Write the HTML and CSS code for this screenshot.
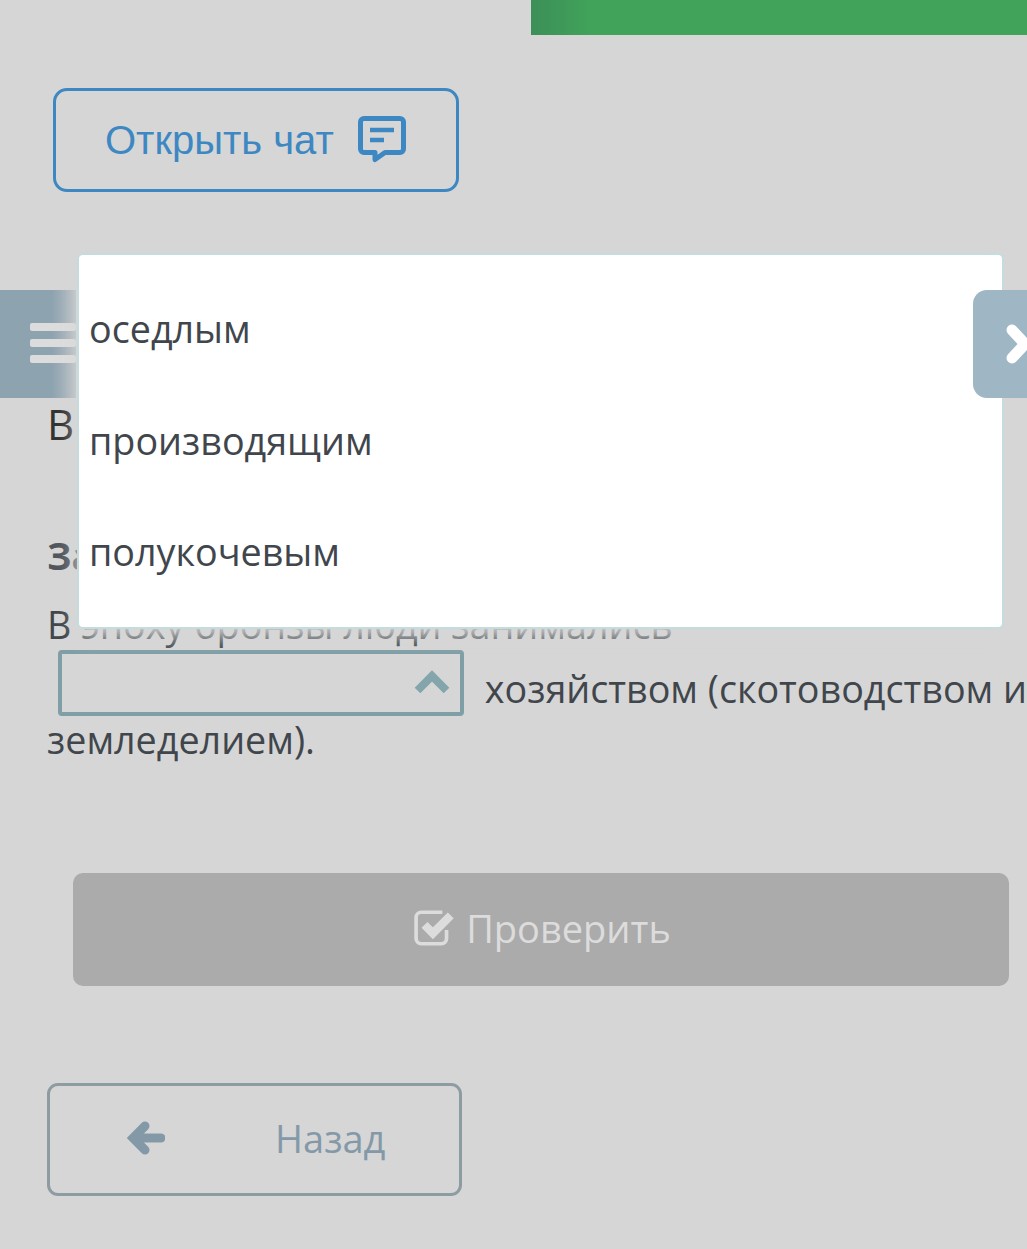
FILE: index.html
```html
<!DOCTYPE html>
<html lang="ru">
<head>
<meta charset="utf-8">
<title>Задание</title>
<link rel="stylesheet" href="styles.css">
</head>
<body>
<div class="page">
  <div class="topbar"></div>
  <button class="chat-btn">
    <span>Открыть чат</span>
    <svg class="chat-icon" viewBox="0 0 48 48" width="48" height="48">
      <path d="M6 2.500h36a3.500 3.500 0 0 1 3.500 3.500v27a3.500 3.500 0 0 1-3.500 3.500H27l-10 7v-7H6A3.500 3.500 0 0 1 2.500 33V6A3.500 3.500 0 0 1 6 2.500z" fill="none" stroke="#3d88c2" stroke-width="5" stroke-linejoin="round"/>
      <path d="M12 14h24M12 24h14" fill="none" stroke="#3d88c2" stroke-width="4.500"/>
    </svg>
  </button>
  <main class="content">
    <h1 class="title">Выбери ответ</h1>
    <h2 class="task">Задание</h2>
    <p class="text">В эпоху бронзы люди занимались <span class="select"><svg class="chev" viewBox="0 0 36 26" width="36" height="26"><path d="M3.500 20.500 18 6l14.500 14.500" fill="none" stroke="#83a5ab" stroke-width="8"/></svg></span> хозяйством (скотоводством и земледелием).</p>
    <button class="check-btn">
      <svg class="check-icon" viewBox="0 0 40 36" width="42" height="38"><path d="M31 20v8a5 5 0 0 1-5 5H7a5 5 0 0 1-5-5V8a5 5 0 0 1 5-5h20" fill="none" stroke="#dcdcdc" stroke-width="3.500"/><path d="M10 15l8 8L35 6" fill="none" stroke="#dcdcdc" stroke-width="8"/></svg>
      <span>Проверить</span>
    </button>
    <button class="back-btn">
      <svg viewBox="0 0 38 34" width="38" height="34"><path d="M18 5 6 17l12 12M7 17h27" fill="none" stroke="#8499a8" stroke-width="9" stroke-linecap="round"/></svg>
      <span>Назад</span>
    </button>
  </main>
  <div class="tab tab-left">
    <span class="bar"></span><span class="bar"></span><span class="bar"></span>
  </div>
  <ul class="dropdown">
    <li>оседлым</li>
    <li>производящим</li>
    <li>полукочевым</li>
  </ul>
  <div class="tab tab-right">
    <svg viewBox="0 0 28 40" width="28" height="40"><path d="M6 6l13 14L6 34" fill="none" stroke="#fff" stroke-width="11" stroke-linecap="round"/></svg>
  </div>
</div>
</body>
</html>
```
FILE: styles.css
```css
* { box-sizing: border-box; }
html, body { margin: 0; height: 100%; }
body { background: #d6d6d6; overflow: hidden; font-family: "Open Sans", sans-serif; }
.page { position: relative; width: 1027px; height: 1249px; overflow: hidden; }
button { font: inherit; background: none; padding: 0; }
.topbar { width: 496px; height: 35px; margin-left: auto; background: linear-gradient(90deg, #3c8f58 0, #41a35a 60px); }
.chat-btn {
  display: flex; align-items: center; gap: 24px;
  width: 406px; height: 104px; margin: 53px 0 0 53px; padding-left: 49px;
  border: 3px solid #3d88c2; border-radius: 14px;
  color: #3d88c2; font-family: "Liberation Sans", sans-serif; font-size: 40px;
}
.chat-icon { flex: none; }
.content { padding: 0 0 0 47px; }
.title { margin: 203px 0 0; font-size: 42px; line-height: 58px; font-weight: 400; color: #333; white-space: nowrap; }
.task { margin: 78px 0 0; font-size: 37.700px; line-height: 50px; font-weight: 700; color: #50565c; }
.text { margin: 19px 0 0; width: 985px; font-size: 37.700px; line-height: 50px; color: #40464c; }
.select {
  display: inline-flex; align-items: center; justify-content: flex-end;
  width: 406px; height: 66px; margin: 0 11px -1px 11px; padding-right: 10px; vertical-align: 7px;
  border: 4px solid #7f9ea5; border-radius: 4px;
}
.check-btn {
  display: flex; align-items: center; justify-content: center; gap: 10px;
  width: 936px; height: 113px; margin: 108px 0 0 26px; padding-bottom: 3px;
  border: 0; border-radius: 10px; background: #ababab; color: #dcdcdc; font-size: 38px;
}
.check-icon { margin-left: 3px; }
.back-btn {
  display: flex; align-items: center; gap: 110px;
  width: 415px; height: 113px; margin: 97px 0 0; padding: 0 0 3px 77px;
  border: 3px solid #8d9ba3; border-radius: 11px; color: #8499a8; font-size: 38px;
}
.tab { position: absolute; top: 290px; height: 108px; display: flex; }
.tab-left {
  left: 0; width: 76px; flex-direction: column; gap: 8px; justify-content: center; padding: 0 0 2px 30px;
  background: linear-gradient(90deg, #8ea3b0 0, #8ea3b0 52px, #b5bdc2 76px);
}
.bar { display: block; width: 46px; height: 8px; border-radius: 2px; background: #dcdcdc; }
.tab-right { left: 973px; width: 54px; align-items: center; padding-left: 33px; background: #9fb6c5; border-radius: 14px 0 0 14px; overflow: hidden; }
.tab-right svg { flex: none; }
.dropdown {
  position: absolute; left: 79px; top: 255px; width: 923px; height: 372px;
  margin: 0; padding: 18px 10px 0; list-style: none;
  background: #fff; border-radius: 4px; box-shadow: 0 0 0 2px #c5dcdf, 0 8px 18px 2px rgba(214,214,214,1);
  font-size: 37.700px; color: #40464c;
}
.dropdown li { height: 111.500px; line-height: 111.500px; }
```
